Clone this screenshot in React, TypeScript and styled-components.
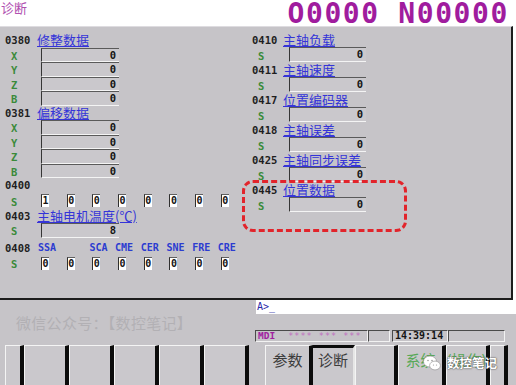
import styled, { createGlobalStyle } from 'styled-components';

const MONO = '"DejaVu Sans Mono", "Liberation Mono", monospace';
const CJK = '"Noto Sans CJK SC", "Noto Sans", sans-serif';

const GlobalStyle = createGlobalStyle`
  body {
    margin: 0;
    background: #fff;
  }
`;

const Screen = styled.div`
  position: relative;
  width: 516px;
  height: 385px;
  overflow: hidden;
  background: #fff;
`;

const Header = styled.header`
  height: 26px;
  display: flex;
  justify-content: space-between;
  align-items: flex-start;
`;

const ScreenTitle = styled.div`
  font-family: ${CJK};
  font-size: 13px;
  line-height: 16px;
  color: #b050b0;
  padding-left: 1px;
`;

const ProgNo = styled.div`
  font-family: ${MONO};
  font-weight: bold;
  font-size: 28px;
  line-height: 26px;
  padding-top: 1px;
  letter-spacing: 1.6px;
  color: #a01c9e;
  padding-right: 7px;
`;

const Panel = styled.main`
  position: relative;
  box-sizing: border-box;
  width: 513px;
  height: 274px;
  padding-top: 6px;
  background: #c6c4c8;
  border-top: 1px solid #dedce0;
  border-right: 2px solid #1c1c1c;
  border-bottom: 2px solid #1c1c1c;
  display: grid;
  grid-template-columns: 252px 1fr;
`;

const Column = styled.div<{ $pad: number; $top?: number }>`
  padding-left: ${p => p.$pad}px;
  margin-top: ${p => p.$top ?? 0}px;
  display: flex;
  flex-direction: column;
`;

const Line = styled.div<{ $h: number; $top?: number }>`
  height: ${p => p.$h}px;
  margin-top: ${p => p.$top ?? 0}px;
  display: flex;
  align-items: center;
`;

const Num = styled.span<{ $w: number }>`
  width: ${p => p.$w}px;
  flex: none;
  font-family: ${MONO};
  font-weight: bold;
  font-size: 10.5px;
  color: #1e1e1e;
`;

const Name = styled.span`
  font-family: ${CJK};
  font-size: 13px;
  line-height: 14px;
  color: #3434d8;
  text-decoration: underline;
  text-underline-offset: 1px;
  white-space: nowrap;
`;

const Axis = styled.span<{ $w: number }>`
  width: ${p => p.$w}px;
  flex: none;
  box-sizing: border-box;
  padding-left: 6px;
  padding-top: 2px;
  font-family: ${MONO};
  font-weight: bold;
  font-size: 10.5px;
  color: #3a8a3a;
`;

const Field = styled.span<{ $w: number }>`
  box-sizing: border-box;
  width: ${p => p.$w}px;
  height: 100%;
  background: #cac8cc;
  border-top: 1px solid #5a5a5a;
  border-left: 1px solid #363636;
  border-bottom: 1px solid #f4f4f4;
  padding-right: 3px;
  text-align: right;
  font-family: ${MONO};
  font-weight: bold;
  font-size: 10.5px;
  line-height: 13px;
  color: #141414;
`;

const BitGrid = styled.div`
  display: grid;
  grid-template-columns: repeat(8, 25.7px);
  align-items: center;
`;

const BitLabel = styled.span`
  padding-left: 1px;
  font-family: ${MONO};
  font-weight: bold;
  font-size: 10px;
  color: #2c3cd0;
`;

const BitBox = styled.span`
  box-sizing: border-box;
  width: 8px;
  height: 13px;
  background: #fff;
  border-left: 1px solid #303030;
  border-top: 1px solid #606060;
  font-family: ${MONO};
  font-weight: bold;
  font-size: 10px;
  line-height: 12px;
  color: #141414;
  text-align: center;
`;

const Annotation = styled.div`
  position: absolute;
  left: 242px;
  top: 153px;
  width: 165px;
  height: 52px;
  box-sizing: border-box;
  border: 3px dashed #e2242b;
  border-radius: 11px;
`;

const Bottom = styled.section`
  height: 85px;
  background: #c6c4c8;
  display: flex;
  flex-direction: column;
`;

const InfoRow = styled.div`
  height: 45px;
  display: grid;
  grid-template-columns: 256px 1fr;
`;

const Watermark = styled.div`
  padding: 14px 0 0 16px;
  font-family: ${CJK};
  font-size: 15px;
  line-height: 17px;
  letter-spacing: 0.3px;
  color: #b2b0b4;
  white-space: nowrap;
`;

const Console = styled.div`
  display: flex;
  flex-direction: column;
`;

const CmdLine = styled.div`
  height: 14px;
  background: #fff;
  padding-left: 1px;
  font-family: ${MONO};
  font-size: 10px;
  line-height: 14px;
  color: #2828a8;
`;

const StatusBar = styled.div`
  margin: 16px 0 0 -1px;
  display: flex;
`;

const StatusBox = styled.div<{ $w: number; $gap?: number }>`
  box-sizing: border-box;
  width: ${p => p.$w}px;
  height: 12px;
  margin-left: ${p => p.$gap ?? 0}px;
  border-top: 1px solid #4a4a4a;
  border-left: 1px solid #4a4a4a;
  border-right: 1px solid #f2f2f2;
  border-bottom: 1px solid #f2f2f2;
  padding-left: 2px;
  font-family: ${MONO};
  font-weight: bold;
  font-size: 10px;
  line-height: 10px;
  color: #141414;
  white-space: nowrap;
  overflow: hidden;
`;

const Mode = styled.span`
  color: #a020a0;
  font-size: 9.5px;
`;

const Stars = styled.span`
  margin-left: 13px;
  color: #c070c0;
  font-size: 8.5px;
  font-weight: normal;
  letter-spacing: 1px;
`;

const KeyRow = styled.nav`
  height: 40px;
  padding-left: 5px;
  display: flex;
`;

const Key = styled.div<{ $w: number; $pressed?: boolean; $green?: boolean; $gap?: number }>`
  box-sizing: border-box;
  width: ${p => p.$w}px;
  height: 44px;
  margin-left: ${p => p.$gap ?? 0}px;
  background: #cac8cc;
  border-top: ${p => (p.$pressed ? '3px solid #0c0c0c' : '1px solid #f4f4f4')};
  border-left: ${p => (p.$pressed ? 'none' : '1px solid #f4f4f4')};
  border-right: ${p => (p.$pressed ? '2px solid #e6e6e6' : '4px solid #0c0c0c')};
  padding-top: ${p => (p.$pressed ? 3 : 5)}px;
  display: flex;
  justify-content: center;
  font-family: ${CJK};
  font-size: 15px;
  line-height: 17px;
  white-space: nowrap;
  color: ${p => (p.$green ? '#58a858' : '#3c3c3c')};
`;

const Stamp = styled.div`
  position: absolute;
  left: 423px;
  top: 355px;
  display: flex;
  align-items: center;
  gap: 6px;
  font-family: ${CJK};
  font-size: 12.5px;
  line-height: 16px;
  font-weight: bold;
  color: #fff;
  text-shadow: 0 0 2px #555, 0 0 1px #333;
`;

function WeChatMark() {
  return (
    <svg width="18" height="16" viewBox="0 0 18 16">
      <ellipse cx="7" cy="6.5" rx="6.5" ry="5.5" fill="#fff" stroke="#8a8a8a" strokeWidth="0.6" />
      <ellipse cx="12" cy="10.5" rx="5.4" ry="4.4" fill="#fff" stroke="#8a8a8a" strokeWidth="0.6" />
      <circle cx="5" cy="5.5" r="0.8" fill="#9a9a9a" />
      <circle cx="9" cy="5.5" r="0.8" fill="#9a9a9a" />
      <circle cx="10.5" cy="10" r="0.6" fill="#9a9a9a" />
      <circle cx="13.5" cy="10" r="0.6" fill="#9a9a9a" />
    </svg>
  );
}

const LH = 14.5;

function AxisGroup({ no, name, axes }: { no: string; name: string; axes: string[] }) {
  return (
    <>
      <Line $h={LH}>
        <Num $w={32}>{no}</Num>
        <Name>{name}</Name>
      </Line>
      {axes.map(a => (
        <Line key={a} $h={LH}>
          <Axis $w={36}>{a}</Axis>
          <Field $w={78}>0</Field>
        </Line>
      ))}
    </>
  );
}

function SpindleItem({ no, name }: { no: string; name: string }) {
  return (
    <>
      <Line $h={15}>
        <Num $w={31}>{no}</Num>
        <Name>{name}</Name>
      </Line>
      <Line $h={15}>
        <Axis $w={37}>S</Axis>
        <Field $w={77}>0</Field>
      </Line>
    </>
  );
}

function BitRow({ bits }: { bits: string[] }) {
  return (
    <Line $h={16}>
      <Axis $w={36}>S</Axis>
      <BitGrid>
        {bits.map((b, i) => (
          <BitBox key={i}>{b}</BitBox>
        ))}
      </BitGrid>
    </Line>
  );
}

const spindle = [
  ['0410', '主轴负载'],
  ['0411', '主轴速度'],
  ['0417', '位置编码器'],
  ['0418', '主轴误差'],
  ['0425', '主轴同步误差'],
  ['0445', '位置数据'],
];

const flags = ['SSA', '', 'SCA', 'CME', 'CER', 'SNE', 'FRE', 'CRE'];

export default function App() {
  return (
    <Screen>
      <GlobalStyle />
      <Header>
        <ScreenTitle>诊断</ScreenTitle>
        <ProgNo>O0000 N00000</ProgNo>
      </Header>

      <Panel>
        <Column $pad={5}>
          <AxisGroup no="0380" name="修整数据" axes={['X', 'Y', 'Z', 'B']} />
          <AxisGroup no="0381" name="偏移数据" axes={['X', 'Y', 'Z', 'B']} />
          <Line $h={LH}>
            <Num $w={32}>0400</Num>
          </Line>
          <BitRow bits={['1', '0', '0', '0', '0', '0', '0', '0']} />
          <Line $h={LH}>
            <Num $w={32}>0403</Num>
            <Name>主轴电机温度(℃)</Name>
          </Line>
          <Line $h={LH}>
            <Axis $w={36}>S</Axis>
            <Field $w={78}>8</Field>
          </Line>
          <Line $h={LH} $top={3}>
            <Num $w={32}>0408</Num>
            <BitGrid>
              {flags.map((f, i) => (
                <BitLabel key={i}>{f}</BitLabel>
              ))}
            </BitGrid>
          </Line>
          <BitRow bits={['0', '0', '0', '0', '0', '0', '0', '0']} />
        </Column>

        <Column $pad={0} $top={-1}>
          {spindle.map(([no, name]) => (
            <SpindleItem key={no} no={no} name={name} />
          ))}
        </Column>

        <Annotation />
      </Panel>

      <Bottom>
        <InfoRow>
          <Watermark>微信公众号：【数控笔记】</Watermark>
          <Console>
            <CmdLine>A&gt;_</CmdLine>
            <StatusBar>
              <StatusBox $w={113}>
                <Mode>MDI</Mode>
                <Stars>**** *** ***</Stars>
              </StatusBox>
              <StatusBox $w={22} />
              <StatusBox $w={56} $gap={2}>14:39:14</StatusBox>
              <StatusBox $w={57} />
            </StatusBar>
          </Console>
        </InfoRow>

        <KeyRow>
          <Key $w={19} />
          <Key $w={45} />
          <Key $w={45} />
          <Key $w={45} />
          <Key $w={45} />
          <Key $w={45} />
          <Key $w={48} $gap={16}>参数</Key>
          <Key $w={42} $pressed>诊断</Key>
          <Key $w={43} />
          <Key $w={48} $green>系统</Key>
          <Key $w={44} $green>(操作)</Key>
          <Key $w={18} />
        </KeyRow>
      </Bottom>

      <Stamp>
        <WeChatMark />
        <span>数控笔记</span>
      </Stamp>
    </Screen>
  );
}
